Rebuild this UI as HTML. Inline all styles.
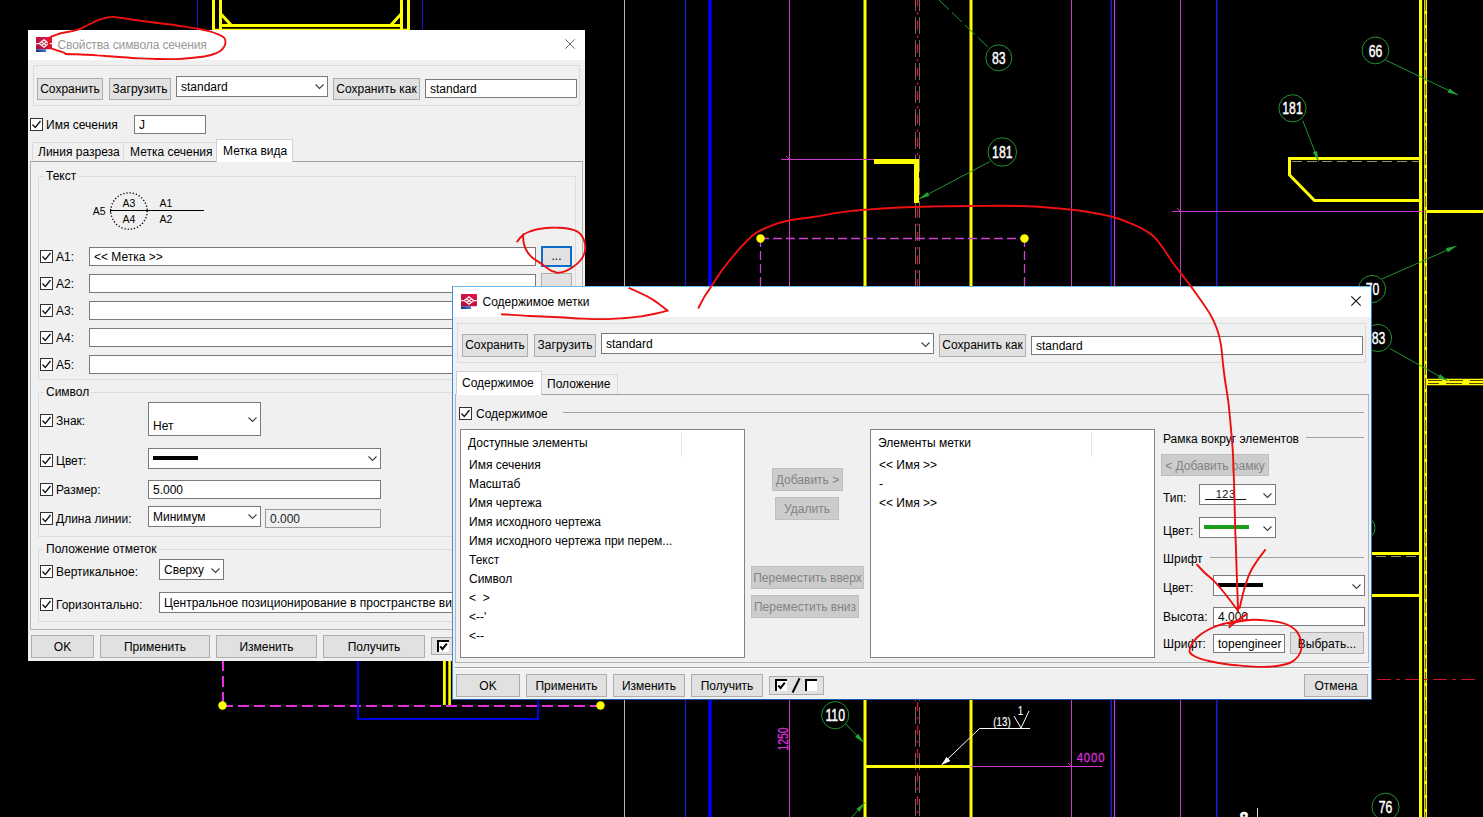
<!DOCTYPE html>
<html lang="ru">
<head>
<meta charset="utf-8">
<title>Свойства символа сечения</title>
<style>
html,body{margin:0;padding:0;background:#000;}
body{width:1483px;height:817px;position:relative;overflow:hidden;font:12px "Liberation Sans",sans-serif;color:#000;}
*{box-sizing:border-box;}
.abs,.dlg *{position:absolute;}
svg{position:absolute;left:0;top:0;overflow:visible;}
.dlg{position:absolute;background:#f0f0f0;overflow:hidden;}
.t{white-space:nowrap;line-height:14px;height:14px;}
.btn{background:#e1e1e1;border:1px solid #adadad;text-align:center;white-space:nowrap;line-height:20px;}
.btn.dis{background:#cccccc;border-color:#bfbfbf;color:#838383;}
.inp{background:#fff;border:1px solid #7a7a7a;white-space:nowrap;overflow:hidden;}
.inp.dis{background:#f0f0f0;border-color:#999;}
.inp span,.cmb span{left:4px;top:2px;line-height:14px;white-space:nowrap;}
.cmb{background:#fff;border:1px solid #7a7a7a;overflow:hidden;}
.grp{border:1px solid #dcdcdc;}
.cb{width:13px;height:13px;background:#fff;border:1px solid #333;}
.cb svg{left:0;top:0;}
.hl{height:1px;background:#a0a0a0;}
.chev{width:9px;height:5px;}.chev path{stroke-width:1.1;stroke:#404040;}
</style>
</head>
<body>
<!-- ================= CAD BACKGROUND ================= -->
<svg id="cad" width="1483" height="817" viewBox="0 0 1483 817" shape-rendering="auto">
<rect width="1483" height="817" fill="#000"/>
<!-- top-left yellow frame -->
<g stroke="#ffff00" stroke-width="3" fill="none">
<line x1="213.5" y1="0" x2="213.5" y2="30"/><line x1="220.5" y1="0" x2="220.5" y2="30"/>
<line x1="401.5" y1="0" x2="401.5" y2="30"/><line x1="408.5" y1="0" x2="408.5" y2="30"/>
<line x1="219" y1="25.5" x2="403" y2="25.5"/>
<line x1="220" y1="13" x2="231" y2="25"/><line x1="402" y1="13" x2="391" y2="25"/>
<line x1="213" y1="30.3" x2="409" y2="30.3"/>
</g>
<line x1="197.5" y1="0" x2="197.5" y2="30" stroke="#1818c8" stroke-width="1"/>
<line x1="422.5" y1="0" x2="422.5" y2="30" stroke="#1818c8" stroke-width="1"/>
<!-- long verticals -->
<line x1="624.5" y1="0" x2="624.5" y2="817" stroke="#b4b4b4" stroke-width="1"/>
<line x1="685.5" y1="0" x2="685.5" y2="817" stroke="#1a1ad0" stroke-width="1.3"/>
<line x1="710" y1="0" x2="710" y2="817" stroke="#0000ff" stroke-width="3.4"/>
<line x1="789.5" y1="0" x2="789.5" y2="817" stroke="#c83cc8" stroke-width="1"/>
<line x1="865" y1="0" x2="865" y2="817" stroke="#ffff00" stroke-width="3"/>
<line x1="971" y1="0" x2="971" y2="817" stroke="#ffff00" stroke-width="3"/>
<line x1="1071.5" y1="0" x2="1071.5" y2="817" stroke="#c83cc8" stroke-width="1"/>
<line x1="1111.2" y1="0" x2="1111.2" y2="817" stroke="#1c1cc4" stroke-width="1.6"/>
<line x1="1114.5" y1="0" x2="1114.5" y2="817" stroke="#c83cc8" stroke-width="1.2"/>
<line x1="1180.5" y1="0" x2="1180.5" y2="817" stroke="#c83cc8" stroke-width="1"/>
<line x1="1216.8" y1="0" x2="1216.8" y2="817" stroke="#1c1cc4" stroke-width="1.6"/>
<!-- red dashed centre -->
<g fill="none">
<line x1="915.5" y1="0" x2="915.5" y2="817" stroke="#a07878" stroke-width=".8" stroke-dasharray="17 6" stroke-dashoffset="6"/>
<line x1="919.5" y1="0" x2="919.5" y2="817" stroke="#a07878" stroke-width=".8" stroke-dasharray="17 6" stroke-dashoffset="6"/>
<line x1="917.5" y1="0" x2="917.5" y2="817" stroke="#d41030" stroke-width="1.3" stroke-dasharray="9 6 2.500 6" stroke-dashoffset="3"/>
</g>
<!-- yellow L near 181 -->
<line x1="874" y1="161.5" x2="919" y2="161.5" stroke="#ffff00" stroke-width="5"/>
<line x1="916.5" y1="159" x2="916.5" y2="203" stroke="#ffff00" stroke-width="5"/>
<line x1="781" y1="159.5" x2="874" y2="159.5" stroke="#c83cc8" stroke-width="1"/>
<path d="M786 156l4 4" stroke="#c83cc8" stroke-width="1" fill="none"/>
<!-- dashed magenta selection rect (upper) -->
<g stroke="#d040d0" stroke-width="1.3" stroke-dasharray="9 4" fill="none">
<line x1="760" y1="238.5" x2="1025" y2="238.5"/>
<line x1="760.5" y1="238" x2="760.5" y2="290"/>
<line x1="1024.5" y1="238" x2="1024.5" y2="290"/>
</g>
<circle cx="760.5" cy="238.5" r="4.2" fill="#ffff00"/><circle cx="1024.5" cy="238.5" r="4.2" fill="#ffff00"/>
<!-- right-side yellow structure -->
<g stroke="#ffff00" fill="none">
<line x1="1420.6" y1="0" x2="1420.6" y2="817" stroke-width="3.2"/>
<line x1="1425.6" y1="0" x2="1425.6" y2="817" stroke-width="2.9"/>
<path d="M1420 158.5H1289.5V175L1314.5 200.5H1420" stroke-width="3"/>
<line x1="1427" y1="211.5" x2="1483" y2="211.5" stroke-width="3"/>
<line x1="1427" y1="382" x2="1483" y2="382" stroke-width="6.400"/>

<line x1="1371" y1="553.5" x2="1420" y2="553.5" stroke-width="3"/>
<line x1="1371" y1="595.5" x2="1420" y2="595.5" stroke-width="3"/>
</g>

<line x1="1425.6" y1="0" x2="1425.6" y2="817" stroke="#5a4e00" stroke-width=".9" stroke-dasharray="11 3"/>
<line x1="1428" y1="380.500" x2="1483" y2="380.500" stroke="#5a4600" stroke-width="1" stroke-dasharray="14 7"/><line x1="1428" y1="383.500" x2="1483" y2="383.500" stroke="#5a4600" stroke-width="1" stroke-dasharray="16 7" stroke-dashoffset="5"/>
<line x1="1292" y1="161.5" x2="1419" y2="161.5" stroke="#909060" stroke-width="1" stroke-dasharray="10 5"/>
<line x1="1376" y1="556.5" x2="1419" y2="556.5" stroke="#909060" stroke-width="1" stroke-dasharray="10 5"/>
<line x1="1172" y1="211.5" x2="1423" y2="211.5" stroke="#c83cc8" stroke-width="1"/>
<path d="M1177 208l4 4" stroke="#c83cc8" stroke-width="1" fill="none"/>
<line x1="1377" y1="679.5" x2="1478" y2="679.5" stroke="#cc1428" stroke-width="1" stroke-dasharray="14 5 4 5"/>
<!-- lower-left selection rect + blue rect -->
<g stroke="#e030e0" stroke-width="2" stroke-dasharray="11 5" fill="none">
<line x1="223" y1="660" x2="223" y2="705"/>
<line x1="222" y1="706" x2="600" y2="706"/>
</g>
<path d="M358 660V719H538V699" stroke="#0000e6" stroke-width="2" fill="none"/>
<line x1="444.4" y1="660" x2="444.4" y2="705" stroke="#ffff00" stroke-width="2.8"/>
<line x1="449.6" y1="660" x2="449.6" y2="705" stroke="#ffff00" stroke-width="2.6"/>
<circle cx="222.5" cy="705.5" r="4.2" fill="#ffff00"/><circle cx="600.5" cy="705.5" r="4.2" fill="#ffff00"/>
<!-- bottom structure -->
<line x1="864" y1="766.5" x2="971" y2="766.5" stroke="#ffff00" stroke-width="3"/>
<line x1="971" y1="766.5" x2="1102" y2="766.5" stroke="#c83cc8" stroke-width="1"/>
<path d="M1068 763l4 4" stroke="#c83cc8" stroke-width="1" fill="none"/>
<path d="M941.5 765L979.5 728.5H1030" stroke="#fff" stroke-width="1" fill="none"/>
<path d="M941.5 765l9-4l-4-4z" fill="#fff"/>
<path d="M1014 716l7 12l8-17" stroke="#fff" stroke-width="1" fill="none"/>
<line x1="1257.5" y1="808" x2="1257.5" y2="817" stroke="#ddd" stroke-width="1"/>
<!-- balloons -->
<g stroke="#259a35" stroke-width=".95" fill="none">
<circle cx="998.8" cy="57.8" r="13"/>
<line x1="939" y1="0" x2="989.5" y2="48.5" stroke-dasharray="14 4"/>
<circle cx="1002.3" cy="152" r="14.3"/>
<line x1="990" y1="161.5" x2="919" y2="199"/>
<circle cx="1375.5" cy="50.4" r="13.4"/>
<line x1="1385.5" y1="60" x2="1458" y2="95"/>
<circle cx="1292.5" cy="108.3" r="13.6"/>
<line x1="1302.8" y1="120.7" x2="1318.7" y2="161.5"/>
<circle cx="1372" cy="289" r="13.6"/>
<line x1="1382" y1="279" x2="1456.5" y2="246"/>
<circle cx="1378" cy="338" r="13.6"/>
<line x1="1389.8" y1="348.5" x2="1448" y2="381"/>
<circle cx="1364" cy="528" r="11"/>
<circle cx="835.2" cy="715.2" r="13.6"/>
<line x1="846" y1="724" x2="864" y2="743"/>
<circle cx="1385.5" cy="806.8" r="13.6"/>
<line x1="851" y1="818" x2="865" y2="802.500"/>
</g>
<g fill="#22a032">
<path d="M919.0 199.0L927.2 192.1L929.4 196.1z"/>
<path d="M1458.0 95.0L1447.5 92.5L1449.5 88.4z"/>
<path d="M1318.7 161.5L1312.7 152.6L1317.0 150.9z"/>
<path d="M1456.5 246.0L1447.8 252.4L1446.0 248.1z"/>
<path d="M1448.0 381.0L1437.7 377.9L1440.0 373.9z"/>
<path d="M864.0 743.0L855.1 737.0L858.4 733.8z"/>
<path d="M865.0 802.5L859.7 811.8L856.3 808.8z"/>
</g>
<g fill="#fff" stroke="#fff" stroke-width="1.35" font-family="'Liberation Sans',sans-serif" text-anchor="middle">
<text transform="translate(998.8,63.9) scale(0.2400,0.3333)" font-size="51">83</text>
<text transform="translate(1002.3,158.1) scale(0.2400,0.3333)" font-size="51">181</text>
<text transform="translate(1375.5,56.5) scale(0.2400,0.3333)" font-size="51">66</text>
<text transform="translate(1292.5,114.4) scale(0.2400,0.3333)" font-size="51">181</text>
<text transform="translate(1372.5,295.1) scale(0.2400,0.3333)" font-size="51">70</text>
<text transform="translate(1378.5,344.1) scale(0.2400,0.3333)" font-size="51">83</text>
<text transform="translate(835.2,721.3) scale(0.2400,0.3333)" font-size="51">110</text>
<text transform="translate(1385.5,812.9) scale(0.2400,0.3333)" font-size="51">76</text>
<text transform="translate(1002,726) scale(0.2400,0.3333)" font-size="40.5" stroke-width="0.6">(13)</text>
<text transform="translate(1020.5,715) scale(0.2400,0.3333)" font-size="37.5" stroke-width="0.6">1</text>
<text transform="translate(1244,826) scale(0.2667,0.3333)" font-size="60" font-weight="bold">8</text>
</g>
<g fill="#e030e0" stroke="#e030e0" stroke-width="0.75" font-family="'Liberation Sans',sans-serif" text-anchor="middle">
<text transform="translate(1091,762.300) scale(0.2800,0.3333)" font-size="40.5" letter-spacing="3">4000</text>
<text transform="translate(787.5,739) rotate(-90) scale(0.2467,0.3333)" font-size="42">1250</text>
</g>
</svg>
<!-- ================= DIALOG 1 ================= -->
<div class="dlg" id="d1" style="left:28px;top:30px;width:557px;height:631px;">
 <div style="left:0;top:0;width:557px;height:30px;background:#fff;"></div>
 <svg style="left:8px;top:7px" width="16" height="15" viewBox="0 0 16 15"><defs><linearGradient id="ig1" x1="0" y1="1" x2="1" y2="0"><stop offset="0" stop-color="#b01040"/><stop offset=".6" stop-color="#cc1440"/><stop offset="1" stop-color="#ee1450"/></linearGradient><linearGradient id="ig1b" x1="0" y1="0" x2="1" y2="0"><stop offset="0" stop-color="#1a2c7c"/><stop offset="1" stop-color="#3a7ad8"/></linearGradient></defs><rect width="16" height="12.3" rx=".8" fill="url(#ig1)"/><rect y="12.300" width="10" height="2.700" fill="url(#ig1b)"/><g stroke="#fff" stroke-width="1.250" fill="none" opacity=".93" stroke-linejoin="round"><path d="M0 6.500H3.200L8 2.800L12.800 6.500H16M3.200 6.500L8 10.300L12.800 6.500"/><path d="M5.300 4.700L10.500 8.500M10.700 4.700L5.500 8.500"/></g></svg>
 <div class="t" style="left:29.5px;top:8px;color:#999;letter-spacing:-.1px;">Свойства символа сечения</div>
 <svg style="left:537px;top:9px" width="10" height="10" viewBox="0 0 10 10"><path d="M.3.300l9.400 9.400M9.700.300l-9.400 9.400" stroke="#6a6a6a" stroke-width="1" fill="none"/></svg>

 <div class="grp" style="left:5px;top:35px;width:547px;height:41px;"></div>
 <div class="btn" style="left:9px;top:48px;width:66px;height:22px;">Сохранить</div>
 <div class="btn" style="left:81px;top:48px;width:62px;height:22px;">Загрузить</div>
 <div class="cmb" style="left:148px;top:46px;width:152px;height:21px;"><span style="top:3px">standard</span><svg class="chev" style="left:138px;top:7px" viewBox="0 0 9 5"><path d="M.5.5l4 4l4-4" stroke="#444" fill="none"/></svg></div>
 <div class="btn" style="left:305px;top:48px;width:87px;height:22px;">Сохранить как</div>
 <div class="inp" style="left:397px;top:49px;width:152px;height:19px;"><span style="top:2px">standard</span></div>

 <div class="cb" style="left:2px;top:88px;"><svg width="11" height="11" viewBox="0 0 11 11"><path d="M1.5 5.5l2.8 3l5.2-6.5" stroke="#111" stroke-width="1.3" fill="none"/></svg></div>
 <div class="t" style="left:18px;top:88px;">Имя сечения</div>
 <div class="inp" style="left:106px;top:85px;width:72px;height:19px;"><span style="top:2px">J</span></div>

 <!-- tabs -->
 <div style="left:2px;top:131px;width:553px;height:469px;border:1px solid #b4b4b4;border-top-color:#a0a0a0;background:#f0f0f0;"></div>
 <div style="left:4px;top:112px;width:92px;height:19px;border:1px solid #dadada;border-bottom:none;border-right:none;background:#f0f0f0;"></div>
 <div style="left:95px;top:112px;width:94px;height:19px;border:1px solid #dadada;border-bottom:none;background:#f0f0f0;"></div>
 <div style="left:188px;top:109px;width:77px;height:23px;border:1px solid #d0d0d0;border-bottom:none;background:#fff;"></div>
 <div style="left:189px;top:131px;width:75px;height:1px;background:#fff;"></div>
 <div class="t" style="left:10px;top:115px;">Линия разреза</div>
 <div class="t" style="left:102px;top:115px;">Метка сечения</div>
 <div class="t" style="left:195px;top:114px;">Метка вида</div>

 <!-- group Текст -->
 <div class="grp" style="left:10px;top:146px;width:538px;height:204px;"></div>
 <div class="t" style="left:16px;top:139px;padding:0 2px;background:#f0f0f0;">Текст</div>
 <svg style="left:60px;top:160px" width="130" height="44" viewBox="88 190 130 44"><circle cx="129" cy="211" r="18.2" fill="none" stroke="#000" stroke-width="1.400" stroke-dasharray="1.200 1.978"/><line x1="110.500" y1="209" x2="110.500" y2="212.500" stroke="#000" stroke-width="1"/><line x1="110" y1="210.500" x2="204" y2="210.500" stroke="#000" stroke-width="1"/><g font-family="'Liberation Sans',sans-serif" font-size="10.5" fill="#000" text-anchor="middle"><text x="99.200" y="215">A5</text><text x="129" y="207">A3</text><text x="129" y="223">A4</text><text x="166" y="207">A1</text><text x="166" y="223">A2</text></g></svg>
 <!-- rows A1..A5 -->
 <div class="cb" style="left:12px;top:220px;"><svg width="11" height="11" viewBox="0 0 11 11"><path d="M1.5 5.5l2.8 3l5.2-6.5" stroke="#111" stroke-width="1.3" fill="none"/></svg></div>
 <div class="t" style="left:28px;top:220px;">A1:</div>
 <div class="inp" style="left:61px;top:217px;width:447px;height:19px;"><span style="top:2px">&lt;&lt; Метка &gt;&gt;</span></div>
 <div class="btn" style="left:513px;top:216px;width:31px;height:21px;border:2px solid #0c6ec8;line-height:16px;">...</div>

 <div class="cb" style="left:12px;top:247px;"><svg width="11" height="11" viewBox="0 0 11 11"><path d="M1.5 5.5l2.8 3l5.2-6.5" stroke="#111" stroke-width="1.3" fill="none"/></svg></div>
 <div class="t" style="left:28px;top:247px;">A2:</div>
 <div class="inp" style="left:61px;top:244px;width:447px;height:19px;"></div>
 <div class="btn" style="left:513px;top:243px;width:31px;height:21px;">...</div>

 <div class="cb" style="left:12px;top:274px;"><svg width="11" height="11" viewBox="0 0 11 11"><path d="M1.5 5.5l2.8 3l5.2-6.5" stroke="#111" stroke-width="1.3" fill="none"/></svg></div>
 <div class="t" style="left:28px;top:274px;">A3:</div>
 <div class="inp" style="left:61px;top:271px;width:447px;height:19px;"></div>

 <div class="cb" style="left:12px;top:301px;"><svg width="11" height="11" viewBox="0 0 11 11"><path d="M1.5 5.5l2.8 3l5.2-6.5" stroke="#111" stroke-width="1.3" fill="none"/></svg></div>
 <div class="t" style="left:28px;top:301px;">A4:</div>
 <div class="inp" style="left:61px;top:298px;width:447px;height:19px;"></div>

 <div class="cb" style="left:12px;top:328px;"><svg width="11" height="11" viewBox="0 0 11 11"><path d="M1.5 5.5l2.8 3l5.2-6.5" stroke="#111" stroke-width="1.3" fill="none"/></svg></div>
 <div class="t" style="left:28px;top:328px;">A5:</div>
 <div class="inp" style="left:61px;top:325px;width:447px;height:19px;"></div>

 <!-- group Символ -->
 <div class="grp" style="left:10px;top:362px;width:538px;height:145px;"></div>
 <div class="t" style="left:16px;top:355px;padding:0 2px;background:#f0f0f0;">Символ</div>

 <div class="cb" style="left:12px;top:384px;"><svg width="11" height="11" viewBox="0 0 11 11"><path d="M1.5 5.5l2.8 3l5.2-6.5" stroke="#111" stroke-width="1.3" fill="none"/></svg></div>
 <div class="t" style="left:28px;top:384px;">Знак:</div>
 <div class="cmb" style="left:120px;top:372px;width:113px;height:34px;"><span style="top:16px">Нет</span><svg class="chev" style="left:99px;top:14px" viewBox="0 0 9 5"><path d="M.5.5l4 4l4-4" stroke="#444" fill="none"/></svg></div>

 <div class="cb" style="left:12px;top:424px;"><svg width="11" height="11" viewBox="0 0 11 11"><path d="M1.5 5.5l2.8 3l5.2-6.5" stroke="#111" stroke-width="1.3" fill="none"/></svg></div>
 <div class="t" style="left:28px;top:424px;">Цвет:</div>
 <div class="cmb" style="left:120px;top:418px;width:233px;height:21px;"><div style="left:4px;top:7px;width:45px;height:4px;background:#000;"></div><svg class="chev" style="left:219px;top:7px" viewBox="0 0 9 5"><path d="M.5.5l4 4l4-4" stroke="#444" fill="none"/></svg></div>

 <div class="cb" style="left:12px;top:453px;"><svg width="11" height="11" viewBox="0 0 11 11"><path d="M1.5 5.5l2.8 3l5.2-6.5" stroke="#111" stroke-width="1.3" fill="none"/></svg></div>
 <div class="t" style="left:28px;top:453px;">Размер:</div>
 <div class="inp" style="left:120px;top:450px;width:233px;height:19px;"><span style="top:2px">5.000</span></div>

 <div class="cb" style="left:12px;top:482px;"><svg width="11" height="11" viewBox="0 0 11 11"><path d="M1.5 5.5l2.8 3l5.2-6.5" stroke="#111" stroke-width="1.3" fill="none"/></svg></div>
 <div class="t" style="left:28px;top:482px;">Длина линии:</div>
 <div class="cmb" style="left:120px;top:476px;width:113px;height:21px;"><span style="top:3px">Минимум</span><svg class="chev" style="left:99px;top:7px" viewBox="0 0 9 5"><path d="M.5.5l4 4l4-4" stroke="#444" fill="none"/></svg></div>
 <div class="inp dis" style="left:237px;top:479px;width:116px;height:19px;"><span style="top:2px;color:#222">0.000</span></div>

 <!-- group Положение отметок -->
 <div class="grp" style="left:10px;top:519px;width:538px;height:73px;"></div>
 <div class="t" style="left:16px;top:512px;padding:0 2px;background:#f0f0f0;">Положение отметок</div>

 <div class="cb" style="left:12px;top:535px;"><svg width="11" height="11" viewBox="0 0 11 11"><path d="M1.5 5.5l2.8 3l5.2-6.5" stroke="#111" stroke-width="1.3" fill="none"/></svg></div>
 <div class="t" style="left:28px;top:535px;">Вертикальное:</div>
 <div class="cmb" style="left:131px;top:529px;width:65px;height:21px;"><span style="top:3px">Сверху</span><svg class="chev" style="left:51px;top:8px" viewBox="0 0 9 5"><path d="M.5.5l4 4l4-4" stroke="#444" fill="none"/></svg></div>

 <div class="cb" style="left:12px;top:568px;"><svg width="11" height="11" viewBox="0 0 11 11"><path d="M1.5 5.5l2.8 3l5.2-6.5" stroke="#111" stroke-width="1.3" fill="none"/></svg></div>
 <div class="t" style="left:28px;top:568px;">Горизонтально:</div>
 <div class="cmb" style="left:131px;top:562px;width:400px;height:21px;"><span style="top:3px">Центральное позиционирование в пространстве вида</span></div>

 <!-- bottom buttons -->
 <div class="btn" style="left:3px;top:605px;padding-top:1px;width:63px;height:23px;line-height:21px;">OK</div>
 <div class="btn" style="left:72px;top:605px;padding-top:1px;width:110px;height:23px;line-height:21px;">Применить</div>
 <div class="btn" style="left:188px;top:605px;padding-top:1px;width:101px;height:23px;line-height:21px;">Изменить</div>
 <div class="btn" style="left:295px;top:605px;padding-top:1px;width:102px;height:23px;line-height:21px;">Получить</div>
 <div class="btn" style="left:403px;top:607px;width:55px;height:18px;"></div>
 <div style="left:409px;top:610px;width:12px;height:12px;background:#fff;border-top:2px solid #000;border-left:2px solid #000;"><svg width="10" height="10" viewBox="0 0 10 10"><path d="M1.300 4.300l2.200 2.900l4.300-5.600" stroke="#000" stroke-width="2" fill="none"/></svg></div>
</div>
<!--DLG1END-->
<!-- ================= DIALOG 2 ================= -->
<div class="dlg" id="d2" style="left:452px;top:286px;width:920px;height:414px;border:1px solid #3a8cd8;border-top-color:#6cb8ea;border-right-color:#2a78c8;border-bottom-color:#1c5aa8;">
 <div style="left:0;top:0;width:918px;height:30px;background:#fff;"></div>
 <svg style="left:8px;top:7px" width="16" height="15" viewBox="0 0 16 15"><defs><linearGradient id="ig2" x1="0" y1="1" x2="1" y2="0"><stop offset="0" stop-color="#b01040"/><stop offset=".6" stop-color="#cc1440"/><stop offset="1" stop-color="#ee1450"/></linearGradient><linearGradient id="ig2b" x1="0" y1="0" x2="1" y2="0"><stop offset="0" stop-color="#1a2c7c"/><stop offset="1" stop-color="#3a7ad8"/></linearGradient></defs><rect width="16" height="12.3" rx=".8" fill="url(#ig2)"/><rect y="12.300" width="10" height="2.700" fill="url(#ig2b)"/><g stroke="#fff" stroke-width="1.250" fill="none" opacity=".93" stroke-linejoin="round"><path d="M0 6.500H3.200L8 2.800L12.800 6.500H16M3.200 6.500L8 10.300L12.800 6.500"/><path d="M5.300 4.700L10.500 8.500M10.700 4.700L5.500 8.500"/></g></svg>
 <div class="t" style="left:29.5px;top:8px;color:#000;">Содержимое метки</div>
 <svg style="left:898px;top:9px" width="10" height="10" viewBox="0 0 10 10"><path d="M.3.300l9.400 9.400M9.700.300l-9.400 9.400" stroke="#111" stroke-width="1.100" fill="none"/></svg>

 <div class="grp" style="left:4px;top:36px;width:909px;height:40px;"></div>
 <div class="btn" style="left:9px;top:47px;width:66px;height:23px;line-height:21px;">Сохранить</div>
 <div class="btn" style="left:81px;top:47px;width:62px;height:23px;line-height:21px;">Загрузить</div>
 <div class="cmb" style="left:148px;top:46px;width:333px;height:21px;"><span style="top:3px">standard</span><svg class="chev" style="left:319px;top:8px" viewBox="0 0 9 5"><path d="M.5.5l4 4l4-4" stroke="#444" fill="none"/></svg></div>
 <div class="btn" style="left:486px;top:47px;width:87px;height:23px;line-height:21px;">Сохранить как</div>
 <div class="inp" style="left:578px;top:49px;width:332px;height:19px;"><span style="top:2px">standard</span></div>

 <!-- tabs -->
 <div style="left:2px;top:107px;width:914px;height:269px;border:1px solid #b4b4b4;border-top-color:#a0a0a0;background:#f0f0f0;"></div>
 <div style="left:88px;top:87px;width:77px;height:20px;border:1px solid #dadada;border-bottom:none;background:#f0f0f0;"></div>
 <div style="left:3px;top:84px;width:86px;height:24px;border:1px solid #d0d0d0;border-bottom:none;background:#fff;"></div>
 <div style="left:4px;top:107px;width:84px;height:1px;background:#fff;"></div>
 <div class="t" style="left:9px;top:89px;">Содержимое</div>
 <div class="t" style="left:94px;top:90px;">Положение</div>

 <div class="cb" style="left:6px;top:120px;"><svg width="11" height="11" viewBox="0 0 11 11"><path d="M1.5 5.500l2.800 3l5.200-6.500" stroke="#111" stroke-width="1.300" fill="none"/></svg></div>
 <div class="t" style="left:23px;top:120px;">Содержимое</div>
 <div class="hl" style="left:110px;top:125px;width:801px;"></div>

 <!-- left list -->
 <div style="left:7px;top:142px;width:285px;height:229px;background:#fff;border:1px solid #828282;"></div>
 <div style="left:228px;top:146px;width:1px;height:24px;background:#e5e5e5;"></div>
 <div class="t" style="left:15px;top:149px;">Доступные элементы</div>
 <div class="t" style="left:16px;top:171px;">Имя сечения</div>
 <div class="t" style="left:16px;top:190px;">Масштаб</div>
 <div class="t" style="left:16px;top:209px;">Имя чертежа</div>
 <div class="t" style="left:16px;top:228px;">Имя исходного чертежа</div>
 <div class="t" style="left:16px;top:247px;">Имя исходного чертежа при перем...</div>
 <div class="t" style="left:16px;top:266px;">Текст</div>
 <div class="t" style="left:16px;top:285px;">Символ</div>
 <div class="t" style="left:16px;top:304px;">&lt;&nbsp;&nbsp;&gt;</div>
 <div class="t" style="left:16px;top:323px;">&lt;--'</div>
 <div class="t" style="left:16px;top:342px;">&lt;--</div>

 <!-- middle buttons -->
 <div class="btn dis" style="left:319px;top:181px;width:71px;height:23px;line-height:22px;">Добавить &gt;</div>
 <div class="btn dis" style="left:322px;top:210px;width:64px;height:23px;line-height:22px;">Удалить</div>
 <div class="btn dis" style="left:298px;top:279px;width:113px;height:23px;line-height:22px;">Переместить вверх</div>
 <div class="btn dis" style="left:298px;top:308px;width:108px;height:23px;line-height:22px;">Переместить вниз</div>

 <!-- right list -->
 <div style="left:417px;top:142px;width:285px;height:229px;background:#fff;border:1px solid #828282;"></div>
 <div style="left:638px;top:146px;width:1px;height:24px;background:#e5e5e5;"></div>
 <div class="t" style="left:425px;top:149px;">Элементы метки</div>
 <div class="t" style="left:426px;top:171px;">&lt;&lt; Имя &gt;&gt;</div>
 <div class="t" style="left:426px;top:190px;">-</div>
 <div class="t" style="left:426px;top:209px;">&lt;&lt; Имя &gt;&gt;</div>

 <!-- right column -->
 <div class="t" style="left:710px;top:145px;">Рамка вокруг элементов</div>
 <div class="hl" style="left:853px;top:150px;width:58px;"></div>
 <div class="btn dis" style="left:708px;top:167px;width:108px;height:22px;line-height:22px;">&lt; Добавить рамку</div>
 <div class="t" style="left:710px;top:204px;">Тип:</div>
 <div class="cmb" style="left:746px;top:197px;width:77px;height:21px;"><span style="left:5px;top:2px;font-size:11px;text-decoration:underline;letter-spacing:.5px;color:#111">&nbsp;&nbsp;&nbsp;123&nbsp;&nbsp;&nbsp;</span><svg class="chev" style="left:63px;top:8px" viewBox="0 0 9 5"><path d="M.5.5l4 4l4-4" stroke="#444" fill="none"/></svg></div>
 <div class="t" style="left:710px;top:237px;">Цвет:</div>
 <div class="cmb" style="left:746px;top:230px;width:77px;height:21px;"><div style="left:4px;top:7px;width:45px;height:4px;background:#1a9e1a;"></div><svg class="chev" style="left:63px;top:8px" viewBox="0 0 9 5"><path d="M.5.5l4 4l4-4" stroke="#444" fill="none"/></svg></div>

 <div class="t" style="left:710px;top:265px;">Шрифт</div>
 <div class="hl" style="left:757px;top:270px;width:154px;"></div>
 <div class="t" style="left:710px;top:294px;">Цвет:</div>
 <div class="cmb" style="left:760px;top:288px;width:152px;height:21px;"><div style="left:4px;top:7px;width:45px;height:4px;background:#000;"></div><svg class="chev" style="left:138px;top:8px" viewBox="0 0 9 5"><path d="M.5.5l4 4l4-4" stroke="#444" fill="none"/></svg></div>
 <div class="t" style="left:710px;top:323px;">Высота:</div>
 <div class="inp" style="left:760px;top:320px;width:152px;height:19px;"><span style="top:2px">4.000</span></div>
 <div class="t" style="left:710px;top:350px;">Шрифт:</div>
 <div class="inp" style="left:760px;top:347px;width:72px;height:19px;"><span style="top:2px;left:4px">topengineer</span></div>
 <div class="btn" style="left:837px;top:345px;width:74px;height:22px;line-height:22px;">Выбрать...</div>

 <!-- bottom buttons -->
 <div style="left:2px;top:380px;width:914px;height:1px;background:#a0a0a0;"></div>
 <div style="left:2px;top:381px;width:914px;height:1px;background:#fff;"></div>
 <div class="btn" style="left:3px;top:387px;padding-top:1px;width:64px;height:23px;line-height:21px;">OK</div>
 <div class="btn" style="left:73px;top:387px;padding-top:1px;width:81px;height:23px;line-height:21px;">Применить</div>
 <div class="btn" style="left:160px;top:387px;padding-top:1px;width:72px;height:23px;line-height:21px;">Изменить</div>
 <div class="btn" style="left:238px;top:387px;padding-top:1px;width:72px;height:23px;line-height:21px;">Получить</div>
 <div class="btn" style="left:316px;top:389px;width:55px;height:19px;"></div>
 <div style="left:322px;top:392px;width:12px;height:12px;background:#fff;border-top:2px solid #000;border-left:2px solid #000;"><svg width="10" height="10" viewBox="0 0 10 10"><path d="M1.300 4.300l2.200 2.900l4.300-5.600" stroke="#000" stroke-width="2" fill="none"/></svg></div>
 <svg style="left:337px;top:390px" width="12" height="17" viewBox="0 0 12 17"><path d="M9.600 1.200L2.600 15.500" stroke="#000" stroke-width="2"/></svg>
 <div style="left:352px;top:392px;width:12px;height:12px;background:#fff;border-top:2px solid #000;border-left:2px solid #000;"></div>
 <div class="btn" style="left:851px;top:387px;padding-top:1px;width:64px;height:23px;line-height:21px;">Отмена</div>
</div>
<!--DLG2END-->
<!-- ================= RED HAND-DRAWN ANNOTATIONS ================= -->
<svg id="annot" width="1483" height="817" viewBox="0 0 1483 817" style="pointer-events:none">
<g stroke="#ec1010" stroke-width="1.9" fill="none" stroke-linecap="round" stroke-linejoin="round">
<path d="M50.4 36.9C52.3 36.2 57.7 34.1 62.0 33.0C66.3 31.9 72.2 31.4 76.4 30.2C80.6 28.9 83.6 27.1 87.0 25.5C90.4 23.9 94.2 21.8 97.0 20.6C99.8 19.4 101.5 18.9 104.0 18.3C106.5 17.7 109.0 16.9 112.0 16.9C115.0 16.8 118.5 17.5 122.0 18.0C125.5 18.5 128.0 19.1 132.7 19.8C137.4 20.5 144.1 21.2 150.0 22.0C155.9 22.8 162.8 23.6 168.3 24.3C173.8 25.0 178.1 25.7 183.0 26.4C187.9 27.1 193.7 27.9 198.0 28.7C202.3 29.5 205.5 30.2 209.0 31.2C212.5 32.2 216.3 33.6 218.8 34.7C221.3 35.8 222.9 36.5 224.0 37.6C225.1 38.7 225.4 39.8 225.5 41.3C225.6 42.8 225.2 44.9 224.3 46.5C223.4 48.1 222.0 49.8 220.3 51.0C218.6 52.2 216.5 53.1 214.0 54.0C211.5 54.9 209.2 55.5 205.4 56.2C201.6 56.9 195.9 57.5 191.0 58.0C186.1 58.5 181.5 58.9 175.8 59.1C170.1 59.3 163.2 59.1 157.0 59.0C150.8 58.9 144.4 58.7 138.7 58.4C133.0 58.1 128.0 57.7 123.0 57.3C118.0 56.9 113.3 56.5 109.0 56.2C104.7 55.9 101.0 55.6 97.0 55.4C93.0 55.1 89.0 54.9 85.3 54.7C81.6 54.5 78.2 54.4 75.0 54.3C71.8 54.2 67.8 54.2 66.0 54.0C64.2 53.8 66.0 53.4 64.5 52.8C63.0 52.2 59.5 51.2 57.0 50.3C54.5 49.4 51.1 48.7 49.7 47.3C48.3 45.9 48.7 43.7 48.8 42.0C48.9 40.3 50.1 37.8 50.4 36.9"/>
<path d="M517.2 241.5C517.7 240.9 519.0 239.1 520.0 238.0C521.0 236.9 522.0 235.8 523.4 234.8C524.8 233.8 526.7 232.8 528.5 232.0C530.3 231.2 532.0 230.6 534.3 230.0C536.5 229.4 539.4 228.9 542.0 228.5C544.6 228.1 547.2 227.8 550.0 227.7C552.8 227.6 556.1 227.6 559.0 227.7C561.9 227.8 565.1 228.1 567.6 228.5C570.1 228.9 572.1 229.5 574.0 230.2C575.9 230.9 577.5 231.5 579.0 232.7C580.5 233.9 581.8 235.8 582.8 237.5C583.8 239.2 584.4 241.2 584.8 243.0C585.2 244.8 585.3 246.8 585.2 248.5C585.1 250.2 584.9 251.8 584.3 253.5C583.7 255.2 582.7 257.3 581.5 259.0C580.3 260.7 578.6 262.5 577.0 263.9C575.4 265.3 573.7 266.5 572.0 267.6C570.3 268.7 568.3 269.9 566.6 270.7C564.9 271.5 563.6 271.8 562.0 272.2C560.4 272.6 558.5 272.9 557.2 272.8C556.0 272.7 555.4 271.9 554.5 271.6C553.6 271.3 553.3 271.9 552.0 271.2C550.7 270.5 548.2 268.7 546.5 267.5C544.8 266.3 543.3 265.1 541.6 263.9C539.9 262.7 537.9 261.6 536.2 260.4C534.5 259.2 532.6 258.0 531.2 256.6C529.8 255.2 528.6 253.8 527.6 252.2C526.6 250.6 525.7 249.2 525.0 247.3C524.3 245.4 523.7 243.2 523.4 241.0C523.1 238.8 523.1 235.4 523.1 234.3"/>
<path d="M501.9 314.2C506.6 314.5 520.5 315.5 530.0 316.0C539.5 316.5 550.5 316.9 559.2 317.3C567.9 317.7 574.4 318.3 582.0 318.6C589.6 318.9 597.9 319.2 604.7 319.1C611.5 319.0 616.9 318.6 623.0 318.2C629.1 317.8 635.9 317.1 641.2 316.4C646.5 315.7 650.6 314.8 655.0 313.8C659.4 312.8 665.4 311.1 667.5 310.6"/>
<path d="M667.5 310.6C666.1 309.5 661.9 306.1 659.0 304.0C656.1 301.9 653.5 300.0 650.3 298.2C647.1 296.4 643.5 294.7 640.0 293.0C636.5 291.3 631.1 289.0 629.3 288.2"/>
<path d="M698.5 307.8C699.5 305.9 702.5 300.1 704.7 296.3C707.0 292.6 709.1 289.7 712.0 285.3C714.9 280.9 718.6 274.9 722.3 269.9C726.0 264.9 730.1 259.8 734.0 255.2C737.9 250.5 742.1 245.7 745.8 242.0C749.5 238.3 751.9 235.6 756.1 232.9C760.3 230.2 765.2 227.9 770.8 225.8C776.4 223.7 782.5 221.8 789.8 220.3C797.1 218.8 807.0 217.9 814.8 216.7C822.6 215.5 830.7 213.9 836.8 212.9C842.9 211.9 846.0 211.5 851.5 210.9C857.0 210.3 861.9 210.0 870.0 209.4C878.1 208.8 889.2 208.0 900.0 207.5C910.8 207.0 923.2 206.7 935.0 206.4C946.8 206.2 960.7 206.1 970.7 206.0C980.7 205.9 986.7 205.8 995.0 205.8C1003.3 205.8 1011.8 205.7 1020.6 206.0C1029.4 206.3 1039.0 206.8 1048.0 207.5C1057.0 208.2 1066.7 209.1 1074.4 210.0C1082.1 210.9 1087.6 211.8 1094.0 213.0C1100.4 214.2 1106.9 215.3 1112.9 217.0C1118.9 218.7 1125.2 221.2 1130.0 223.1C1134.8 225.0 1137.8 226.2 1141.7 228.4C1145.6 230.6 1150.1 233.1 1153.5 236.2C1156.9 239.3 1159.2 242.8 1162.3 247.0C1165.4 251.2 1169.0 257.3 1172.1 261.7C1175.2 266.1 1177.8 269.3 1180.9 273.4C1184.0 277.5 1187.4 281.7 1190.7 286.1C1194.0 290.5 1197.2 295.1 1200.5 299.8C1203.8 304.5 1207.5 309.6 1210.3 314.5C1213.1 319.4 1215.3 324.1 1217.1 329.2C1218.9 334.3 1220.1 339.8 1221.0 344.9C1221.9 350.0 1222.0 354.5 1222.6 360.0C1223.2 365.5 1223.7 370.9 1224.7 378.0C1225.7 385.1 1227.4 394.3 1228.4 402.5C1229.4 410.7 1230.1 418.9 1230.8 427.0C1231.5 435.1 1232.3 443.2 1232.8 451.4C1233.3 459.6 1233.5 467.9 1233.8 476.0C1234.1 484.1 1234.3 491.2 1234.5 500.0C1234.7 508.8 1235.0 520.5 1235.2 528.8C1235.5 537.1 1235.8 542.7 1236.0 550.0C1236.2 557.3 1236.5 565.8 1236.7 572.8C1236.9 579.8 1237.2 585.6 1237.4 592.0C1237.6 598.4 1238.0 607.8 1238.1 611.0"/>
<path d="M1197.0 564.6C1198.3 566.0 1202.1 570.2 1205.0 573.0C1207.9 575.8 1211.1 577.9 1214.6 581.6C1218.1 585.3 1222.1 590.1 1226.0 595.0C1229.9 599.9 1236.1 608.3 1238.1 611.0"/>
<path d="M1265.2 549.9C1263.8 551.8 1259.5 557.2 1257.0 561.0C1254.5 564.8 1252.1 568.0 1249.9 572.8C1247.7 577.6 1245.7 584.1 1244.0 590.0C1242.3 595.9 1240.3 605.0 1239.6 608.0"/>
<path d="M1229.3 627.2C1230.8 626.0 1235.0 622.2 1238.0 620.0C1241.0 617.8 1245.5 615.0 1247.0 614.0"/>
<path d="M1247.0 619.8C1244.5 620.2 1236.9 621.0 1232.0 622.0C1227.1 623.0 1221.9 624.2 1217.6 625.7C1213.3 627.2 1209.4 629.0 1206.0 631.0C1202.6 633.0 1199.4 635.2 1197.0 637.5C1194.6 639.8 1192.7 642.6 1191.5 645.0C1190.3 647.4 1188.8 650.0 1189.7 652.1C1190.6 654.2 1193.8 656.0 1197.0 657.5C1200.2 659.0 1204.5 660.0 1208.8 661.0C1213.1 662.0 1218.1 663.0 1223.0 663.7C1227.9 664.4 1233.1 664.9 1238.1 665.4C1243.1 665.9 1248.1 666.4 1253.0 666.6C1257.9 666.8 1263.0 667.0 1267.5 666.8C1272.0 666.6 1276.1 666.2 1280.0 665.5C1283.9 664.8 1288.0 663.9 1291.0 662.4C1294.0 660.9 1296.3 658.7 1298.0 656.5C1299.7 654.3 1300.8 652.0 1301.3 649.2C1301.8 646.5 1301.5 642.9 1300.8 640.0C1300.1 637.1 1298.6 633.9 1296.9 631.6C1295.2 629.3 1293.0 627.7 1290.5 626.2C1288.0 624.7 1286.0 623.7 1282.2 622.8C1278.5 621.9 1272.9 621.1 1268.0 620.6C1263.1 620.1 1257.5 619.7 1252.8 619.8C1248.1 619.9 1243.9 620.6 1240.0 621.3C1236.1 622.0 1231.1 623.7 1229.3 624.2"/>
</g>
</svg>
<!--ANNOTEND-->
</body>
</html>
